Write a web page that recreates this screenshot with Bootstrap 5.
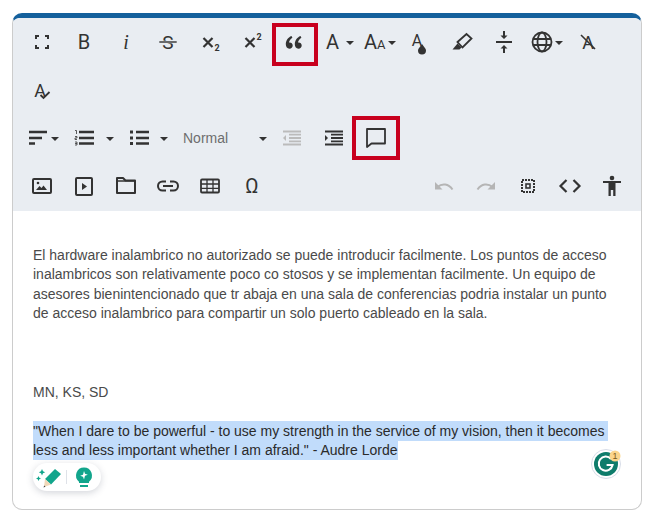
<!DOCTYPE html>
<html lang="es">
<head>
<meta charset="utf-8">
<title>Editor</title>
<link href="https://cdn.jsdelivr.net/npm/bootstrap@5.3.0/dist/css/bootstrap.min.css" rel="stylesheet">
<style>
html,body{background:#fff;margin:0}
.page-wrap{padding:13px 14px 14px 12px}
.editor-box{height:497px;border:1px solid #ccc;border-top:5px solid #14609c;border-radius:10px;overflow:visible;background:#fff}
.tool-area{background:#e9edf2;padding:0 8px;height:192.5px;border-radius:6px 6px 0 0}
.tb{width:42px;height:48px;padding:0;border:0;border-radius:0;background:none;color:#333;flex:none;position:relative;display:block}
.tb svg{display:block;width:100%;height:48px;overflow:visible}
.tb text{font-family:Roboto,"Liberation Sans",sans-serif;fill:#333}
.w58{width:58px}.w52{width:52px}.w98{width:98px}
.marked::after{content:"";position:absolute;border:4px solid #c8001e}
.mark-a::after{left:-1px;top:5px;width:46px;height:43px}
.mark-b::after{left:-3px;top:2px;width:48px;height:44px}
.edit-body{padding:35px 20px 0;font:14px/19.6px "Liberation Sans",Arial,sans-serif;color:#4a4a4a;position:relative}
.edit-body p{margin:0}
.gap-1l{height:19.6px}
.gap-3l{height:58.8px}
.sel-text{background:#c1dcfb;color:#2a2a2a;padding:2px 0;-webkit-box-decoration-break:clone;box-decoration-break:clone}
.gr-pill{position:absolute;left:20px;top:252.5px;width:68px;height:28px;border-radius:14px;background:#fff;box-shadow:0 2px 7px rgba(60,70,90,.22)}
.gr-pill svg{display:block}
.gr-round{position:absolute;left:577px;top:237px;width:32px;height:32px}
.gr-round svg{display:block}
.gr-round text{font-family:"Liberation Sans",sans-serif;font-size:9px;fill:#7a5a20}
</style>
</head>
<body>
<div class="page-wrap">
<div class="card editor-box">
<div class="tool-area">
<div class="d-flex flex-wrap">
<button class="btn tb" aria-label="Fullscreen"><svg viewBox="0 0 42 48"><path d="M15 21v-3h3M24 18h3v3M27 27v3h-3M18 30h-3v-3" fill="none" stroke="#333" stroke-width="2"/></svg></button>
<button class="btn tb"><svg viewBox="0 0 42 48"><text x="21" y="31" text-anchor="middle" font-size="20" font-weight="400">B</text></svg></button>
<button class="btn tb"><svg viewBox="0 0 42 48"><text x="21" y="31" text-anchor="middle" font-size="20" font-style="italic" style="font-family:'Liberation Serif',serif" font-weight="400">i</text></svg></button>
<button class="btn tb"><svg viewBox="0 0 42 48"><text x="21" y="31" text-anchor="middle" font-size="19">S</text><rect x="12" y="23" width="18" height="2" fill="#333" stroke="#e9edf2" stroke-width=".6"/></svg></button>
<button class="btn tb"><svg viewBox="0 0 42 48"><path d="M14.500 20l9 9M23.500 20l-9 9" stroke="#333" stroke-width="2.200" fill="none"/><text x="28" y="33" text-anchor="middle" font-size="9" font-weight="700">2</text></svg></button>
<button class="btn tb"><svg viewBox="0 0 42 48"><path d="M14.500 20l9 9M23.500 20l-9 9" stroke="#333" stroke-width="2.200" fill="none"/><text x="28" y="22" text-anchor="middle" font-size="9" font-weight="700">2</text></svg></button>
<button class="btn tb marked mark-a"><svg viewBox="0 0 42 48"><path d="M18.500 18c-3.600 1.400-5.700 4.800-5.700 8.300 0 2.500 1.500 4.400 3.600 4.400 1.900 0 3.300-1.400 3.300-3.200s-1.300-3-3-3c-.3 0-.5 0-.7.100.2-1.900 1.500-3.700 3.400-4.900zM27.500 18c-3.600 1.400-5.700 4.800-5.700 8.300 0 2.500 1.500 4.400 3.600 4.400 1.900 0 3.300-1.400 3.300-3.200s-1.300-3-3-3c-.3 0-.5 0-.7.100.2-1.900 1.500-3.700 3.400-4.900z" fill="#333"/></svg></button>
<button class="btn tb"><svg viewBox="0 0 42 48"><text x="17.500" y="31" text-anchor="middle" font-size="20">A</text><path d="M31 23h8l-4 4z" fill="#333"/></svg></button>
<button class="btn tb"><svg viewBox="0 0 42 48"><text x="7" y="31" font-size="20">A</text><text x="20" y="31" font-size="13">A</text><path d="M31 23h8l-4 4z" fill="#333"/></svg></button>
<button class="btn tb"><svg viewBox="0 0 42 48"><text x="18" y="28" text-anchor="middle" font-size="16">A</text><path d="M23 26c2 3 4 4.500 4 6.500a4 4 0 0 1-8 0c0-2 2-3.500 4-6.500z" fill="#333"/></svg></button>
<button class="btn tb"><svg viewBox="0 0 42 48"><path d="M16.500 24l9-8 5 4.500-9 9z" fill="none" stroke="#333" stroke-width="1.800"/><path d="M16.500 25.500l4 4-2 2h-7z" fill="#333"/></svg></button>
<button class="btn tb"><svg viewBox="0 0 42 48"><rect x="13" y="23" width="16" height="2" fill="#333"/><path d="M20 13h2v4.500h2.500L21 21l-3.500-3.500H20zM21 27l3.500 3.500H22V35h-2v-4.500h-2.500z" fill="#333"/></svg></button>
<button class="btn tb"><svg viewBox="0 0 42 48"><g fill="none" stroke="#333" stroke-width="1.800"><circle cx="17" cy="24" r="9.500"/><ellipse cx="17" cy="24" rx="4.500" ry="9.500"/><path d="M8 21h18M8 27h18"/></g><path d="M30 23h8l-4 4z" fill="#333"/></svg></button>
<button class="btn tb"><svg viewBox="0 0 42 48"><text x="21" y="31" text-anchor="middle" font-size="18">A</text><path d="M14 17l14 14" stroke="#333" stroke-width="1.600"/></svg></button>
<button class="btn tb"><svg viewBox="0 0 42 48"><text x="19" y="31" text-anchor="middle" font-size="18">A</text><path d="M19.500 29l3 3 6-6" fill="none" stroke="#333" stroke-width="1.800"/></svg></button>
</div>
<div class="d-flex">
<button class="btn tb"><svg viewBox="0 0 42 48"><path d="M8 18h18M8 24h13M8 29.500h6" stroke="#333" stroke-width="2.400"/><path d="M30 23h8l-4 4z" fill="#333"/></svg></button>
<button class="btn tb w58"><svg viewBox="0 0 58 48"><path d="M16 18h15M16 24h15M16 29.500h15" stroke="#333" stroke-width="2.400"/><path d="M12 16.500h1.500v3.500M12 22.500h2v1.500h-2v1.500h2M12 28h2v3h-2M12 29.500h2" stroke="#333" stroke-width=".8" fill="none"/><path d="M43 23h8l-4 4z" fill="#333"/></svg></button>
<button class="btn tb w52"><svg viewBox="0 0 52 48"><path d="M15 18h13M15 24h13M15 29.500h13" stroke="#333" stroke-width="2.400"/><path d="M9 18h3M9 24h3M9 29.500h3" stroke="#333" stroke-width="2.800"/><path d="M39 23h8l-4 4z" fill="#333"/></svg></button>
<button class="btn tb w98"><svg viewBox="0 0 98 48"><text x="10" y="29" font-size="14" style="fill:#6e6e6e;font-family:'Liberation Sans',sans-serif">Normal</text><path d="M86 23h8l-4 4z" fill="#333"/></svg></button>
<button class="btn tb"><svg viewBox="0 0 42 48"><path d="M12 17.500h18M18 24h12M18 20.700h12M18 27.300h12M12 30.500h18" stroke="#bbb" stroke-width="1.800"/><path d="M15 21v6l-3-3z" fill="#bbb"/></svg></button>
<button class="btn tb"><svg viewBox="0 0 42 48"><path d="M12 17.500h18M18 24h12M18 20.700h12M18 27.300h12M12 30.500h18" stroke="#333" stroke-width="1.800"/><path d="M12 21v6l3-3z" fill="#333"/></svg></button>
<button class="btn tb marked mark-b"><svg viewBox="0 0 42 48"><path d="M12 15h18v14.500H16.500L12 33z" fill="none" stroke="#333" stroke-width="1.800" stroke-linejoin="round"/></svg></button>
</div>
<div class="d-flex">
<button class="btn tb"><svg viewBox="0 0 42 48"><rect x="12" y="17" width="18" height="14" rx="1" fill="none" stroke="#333" stroke-width="2"/><circle cx="17" cy="21" r="1.300" fill="#333"/><path d="M15 28l3.500-4 2 2 2-2.500 3.500 4.500z" fill="#333"/></svg></button>
<button class="btn tb"><svg viewBox="0 0 42 48"><rect x="13" y="16" width="16" height="17" rx="1" fill="none" stroke="#333" stroke-width="2"/><path d="M19 21l5 3.500-5 3.500z" fill="#333"/></svg></button>
<button class="btn tb"><svg viewBox="0 0 42 48"><path d="M12 31V16h6l2.500 2.500H30V31z" fill="none" stroke="#333" stroke-width="2" stroke-linejoin="round"/><path d="M12 19h18" stroke="#333" stroke-width="1.500"/></svg></button>
<button class="btn tb"><svg viewBox="0 0 42 48"><path d="M19 19.500h-3.500a4.500 4.500 0 0 0 0 9H19M23 19.500h3.500a4.500 4.500 0 0 1 0 9H23M16 24h10" fill="none" stroke="#333" stroke-width="2"/></svg></button>
<button class="btn tb"><svg viewBox="0 0 42 48"><rect x="12" y="17.500" width="18" height="13" rx="1" fill="none" stroke="#333" stroke-width="1.800"/><path d="M12 22h18M12 26.300h18M18 17.500v13M24 17.500v13" stroke="#333" stroke-width="1.300"/></svg></button>
<button class="btn tb"><svg viewBox="0 0 42 48"><text x="21" y="31" text-anchor="middle" font-size="20">Ω</text></svg></button>
<button class="btn tb ms-auto"><svg viewBox="0 0 42 48"><path d="M12 20v7.500h7.500z" fill="#b5b5b5"/><path d="M14.500 25c4.500-4 11-3.500 15 2.500" fill="none" stroke="#b5b5b5" stroke-width="2"/></svg></button>
<button class="btn tb"><svg viewBox="0 0 42 48"><path d="M30 20v7.500h-7.500z" fill="#b5b5b5"/><path d="M27.500 25c-4.500-4-11-3.500-15 2.500" fill="none" stroke="#b5b5b5" stroke-width="2"/></svg></button>
<button class="btn tb"><svg viewBox="0 0 42 48"><path d="M15 18h12v12H15z" fill="none" stroke="#333" stroke-width="2" stroke-dasharray="2 1"/><rect x="19" y="22" width="4" height="4" fill="none" stroke="#333" stroke-width="1.600"/></svg></button>
<button class="btn tb"><svg viewBox="0 0 42 48"><path d="M17.500 18l-6 6 6 6M24.500 18l6 6-6 6" fill="none" stroke="#333" stroke-width="2.200"/></svg></button>
<button class="btn tb"><svg viewBox="0 0 42 48"><circle cx="21" cy="16" r="2.300" fill="#333"/><path d="M12 19h18v2h-5.500v13h-2.300v-6h-2.400v6h-2.300V21H12z" fill="#333"/></svg></button>
</div>
</div>
<div class="edit-body">
<p>El hardware inalambrico no autorizado se puede introducir facilmente. Los puntos de acceso<br>inalambricos son relativamente poco co stosos y se implementan facilmente. Un equipo de<br>asesores bienintencionado que tr abaja en una sala de conferencias podria instalar un punto<br>de acceso inalambrico para compartir un solo puerto cableado en la sala.</p>
<div class="gap-3l"></div>
<p>MN, KS, SD</p>
<div class="gap-1l"></div>
<p><span class="sel-text">"When I dare to be powerful - to use my strength in the service of my vision, then it becomes&nbsp;<br>less and less important whether I am afraid." - Audre Lorde</span></p>
<div class="gr-pill"><svg width="68" height="28" viewBox="0 0 68 28"><path d="M12 16L22 6l6 5-10 10.500z" fill="#12a58c"/><path d="M12 16l6 5.500-7 2.500z" fill="#f1d8b8"/><path d="M10.500 24.500l2-.7-1.300-1.300z" fill="#444"/><path d="M7 7l1 2.200 2.200 1-2.200 1L7 13.400l-1-2.200-2.200-1 2.200-1zM3.500 14l.8 1.700 1.700.8-1.700.8-.8 1.700-.8-1.700-1.700-.8 1.700-.8z" fill="#12a58c" transform="translate(2 -1)"/><path d="M33.500 7v14" stroke="#dfe2e8"/><path d="M51 4.500a8 8 0 0 0-5 14.200V20h10v-1.300a8 8 0 0 0-5-14.200zM47 22h8v2h-8z" fill="#12a58c"/><path d="M51 8l1 2.800 2.800 1-2.800 1L51 16.500l-1-2.700-2.800-1 2.800-1z" fill="#fff"/></svg></div>
<div class="gr-round"><svg width="42" height="36" viewBox="0 0 42 36"><circle cx="16" cy="16" r="14.500" fill="#fff" stroke="#d8dde8"/><circle cx="16" cy="16" r="12" fill="#0e7c6b"/><path d="M21 11a7 7 0 1 0 1.600 6h-6" fill="none" stroke="#fff" stroke-width="2"/><circle cx="25" cy="8" r="5.500" fill="#fbd58c"/><text x="25" y="11" text-anchor="middle">1</text></svg></div>
</div>
</div>
</div>
<script src="https://cdn.jsdelivr.net/npm/bootstrap@5.3.0/dist/js/bootstrap.bundle.min.js"></script>
</body>
</html>
